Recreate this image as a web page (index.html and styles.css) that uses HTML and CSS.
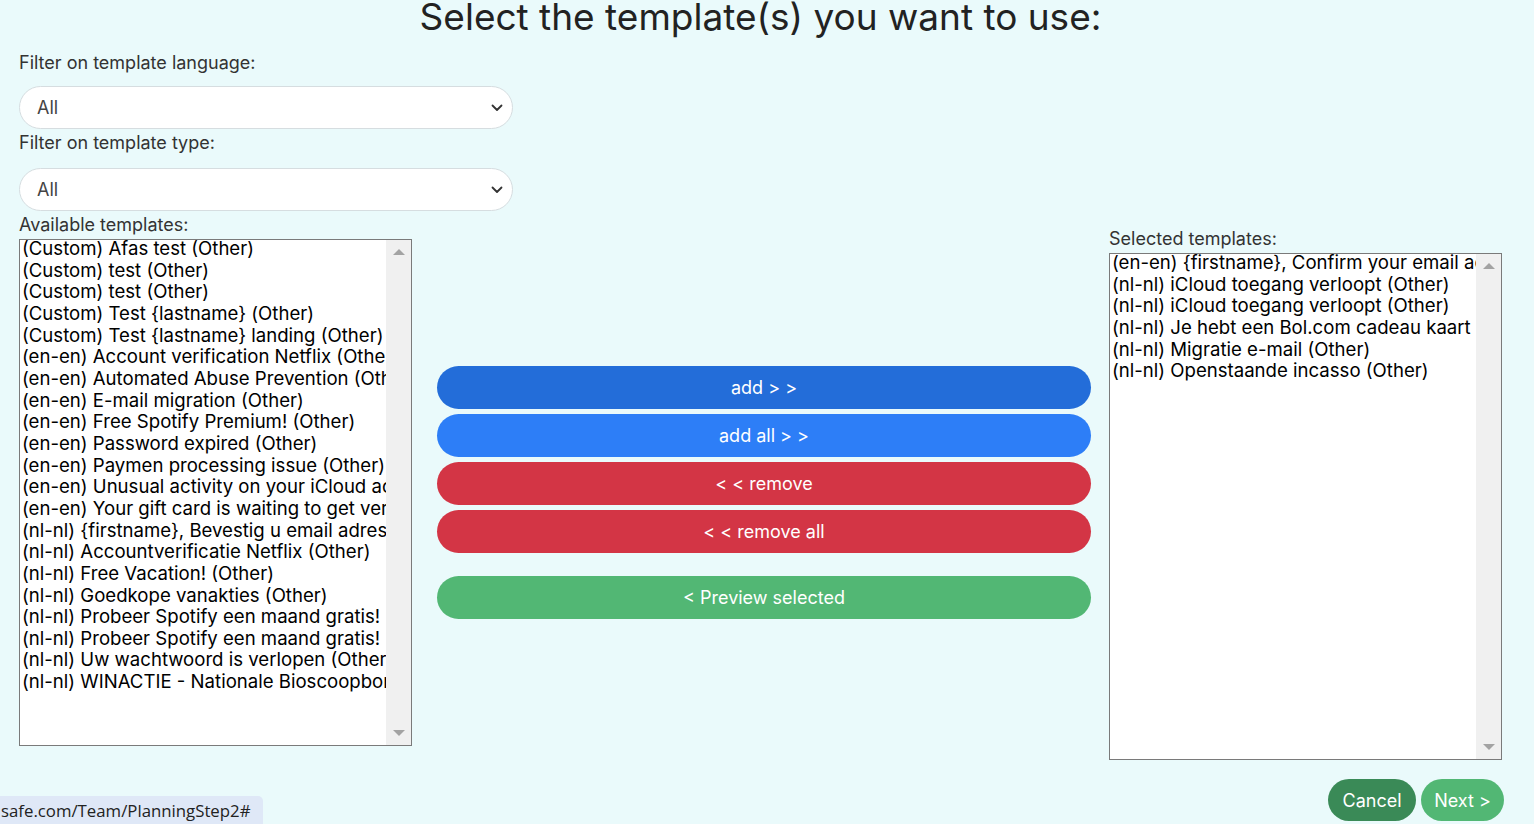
FILE: index.html
```html
<!DOCTYPE html>
<html lang="en">
<head>
<meta charset="utf-8">
<title>Select templates</title>
<link rel="stylesheet" href="styles.css">
</head>
<body>
<div class="page">
  <h1 class="title">Select the template(s) you want to use:</h1>

  <div class="filters">
    <label class="lbl first">Filter on template language:</label>
    <div class="select"><span>All</span>
      <svg class="chev" width="12" height="8" viewBox="0 0 12 8"><path d="M1.5 1.5 L6 6 L10.5 1.5" fill="none" stroke="#333" stroke-width="1.8" stroke-linecap="round" stroke-linejoin="round"/></svg>
    </div>
    <label class="lbl">Filter on template type:</label>
    <div class="select"><span>All</span>
      <svg class="chev" width="12" height="8" viewBox="0 0 12 8"><path d="M1.5 1.5 L6 6 L10.5 1.5" fill="none" stroke="#333" stroke-width="1.8" stroke-linecap="round" stroke-linejoin="round"/></svg>
    </div>
  </div>

  <div class="row">
    <div class="col left">
      <label class="lbl">Available templates:</label>
      <div class="listbox">
        <ul class="items">
          <li>(Custom) Afas test (Other)</li>
          <li>(Custom) test (Other)</li>
          <li>(Custom) test (Other)</li>
          <li>(Custom) Test {lastname} (Other)</li>
          <li>(Custom) Test {lastname} landing (Other)</li>
          <li>(en-en) Account verification Netflix (Other)</li>
          <li>(en-en) Automated Abuse Prevention (Other)</li>
          <li>(en-en) E-mail migration (Other)</li>
          <li>(en-en) Free Spotify Premium! (Other)</li>
          <li>(en-en) Password expired (Other)</li>
          <li>(en-en) Paymen processing issue (Other)</li>
          <li>(en-en) Unusual activity on your iCloud account (Other)</li>
          <li>(en-en) Your gift card is waiting to get verified (Other)</li>
          <li>(nl-nl) {firstname}, Bevestig u email adres (Other)</li>
          <li>(nl-nl) Accountverificatie Netflix (Other)</li>
          <li>(nl-nl) Free Vacation! (Other)</li>
          <li>(nl-nl) Goedkope vanakties (Other)</li>
          <li>(nl-nl) Probeer Spotify een maand gratis! (Other)</li>
          <li>(nl-nl) Probeer Spotify een maand gratis! (Other)</li>
          <li>(nl-nl) Uw wachtwoord is verlopen (Other)</li>
          <li>(nl-nl) WINACTIE - Nationale Bioscoopbon (Other)</li>
        </ul>
        <div class="scrollbar"><span class="arrow up"></span><span class="arrow down"></span></div>
      </div>
    </div>

    <div class="col middle">
      <button class="btn add">add &gt; &gt;</button>
      <button class="btn addall">add all &gt; &gt;</button>
      <button class="btn remove">&lt; &lt; remove</button>
      <button class="btn remove">&lt; &lt; remove all</button>
      <button class="btn preview">&lt; Preview selected</button>
    </div>

    <div class="col right">
      <label class="lbl">Selected templates:</label>
      <div class="listbox">
        <ul class="items">
          <li>(en-en) {firstname}, Confirm your email address (Other)</li>
          <li>(nl-nl) iCloud toegang verloopt (Other)</li>
          <li>(nl-nl) iCloud toegang verloopt (Other)</li>
          <li>(nl-nl) Je hebt een Bol.com cadeau kaart gewonnen (Other)</li>
          <li>(nl-nl) Migratie e-mail (Other)</li>
          <li>(nl-nl) Openstaande incasso (Other)</li>
        </ul>
        <div class="scrollbar"><span class="arrow up"></span><span class="arrow down"></span></div>
      </div>
    </div>
  </div>

  <div class="actions">
    <button class="pill cancel">Cancel</button>
    <button class="pill next">Next &gt;</button>
  </div>
</div>

<div class="status">safe.com/Team/PlanningStep2#</div>
</body>
</html>
```

FILE: styles.css
```css
* { box-sizing: border-box; }
html, body { margin: 0; padding: 0; }
body {
  background: #eafafb;
  font-family: Inter, "Noto Sans", sans-serif;
  color: #222;
  width: 1534px;
  height: 824px;
  overflow: hidden;
}
.page {
  padding: 0 32px 0 19px;
}
.title {
  margin: -2px 0 0 0;
  font-weight: 400;
  font-size: 37px;
  line-height: 38px;
  height: 38px;
  text-align: center;
  color: #222;
}
.lbl {
  display: block;
  font-size: 18px;
  line-height: 22px;
  color: #333;
}
.filters { margin-top: 16px; width: 494px; }
.filters .lbl { margin-bottom: 14px; }
.filters .lbl.first { margin-bottom: 12px; }
.select {
  height: 43px;
  background: #fff;
  border: 1px solid #d6dde0;
  border-radius: 22px;
  display: flex;
  align-items: center;
  justify-content: space-between;
  padding: 0 9px 0 17px;
  font-size: 18px;
  color: #444;
  margin-bottom: 3px;
}
.row {
  display: grid;
  grid-template-columns: 393px 1fr 393px;
}
.left .lbl { margin-bottom: 3px; }
.right { padding-top: 14px; }
.right .lbl { margin-bottom: 3px; }
.listbox {
  height: 507px;
  border: 1px solid #7a7a7a;
  background: #fff;
  display: flex;
  overflow: hidden;
}
.items {
  list-style: none;
  margin: -2px 0 0 0;
  padding: 0 0 0 2px;
  flex: 1;
  min-width: 0;
  overflow: hidden;
}
.items li {
  font-size: 18.6px;
  line-height: 21.65px;
  color: #000;
  white-space: nowrap;
  overflow: hidden;
}
.scrollbar {
  width: 25px;
  flex: none;
  background: #f0f0f0;
  display: flex;
  flex-direction: column;
  justify-content: space-between;
  align-items: center;
  padding: 9px 0 9px;
}
.arrow { width: 0; height: 0; border-left: 6px solid transparent; border-right: 6px solid transparent; }
.arrow.up { border-bottom: 6px solid #a3a3a3; }
.arrow.down { border-top: 6px solid #a3a3a3; }

.middle {
  padding: 152px 18px 0 25px;
  display: flex;
  flex-direction: column;
}
.btn {
  height: 43px;
  border: none;
  border-radius: 22px;
  color: #fff;
  font-family: inherit;
  font-size: 18px;
  margin-bottom: 5px;
  cursor: pointer;
}
.add { background: #236dd9; }
.addall { background: #2d7ef7; }
.remove { background: #d33545; }
.preview { background: #52b774; margin-top: 18px; }

.actions {
  display: flex;
  justify-content: flex-end;
  gap: 5px;
  margin-top: 19px;
  margin-right: -2px;
}
.pill {
  height: 42px;
  border: none;
  border-radius: 21px;
  color: #fff;
  font-family: inherit;
  font-size: 18px;
  padding: 0;
}
.cancel { background: #3a8a57; width: 88px; }
.next { background: #52b774; width: 83px; }

.status {
  position: fixed;
  left: 0;
  bottom: 0;
  width: 263px;
  height: 28px;
  background: #dfe8f7;
  border-top-right-radius: 5px;
  font-family: "Open Sans", "Noto Sans", sans-serif;
  font-size: 16.8px;
  line-height: 30px;
  padding-left: 1px;
  color: #222;
  white-space: nowrap;
  overflow: hidden;
}
```
